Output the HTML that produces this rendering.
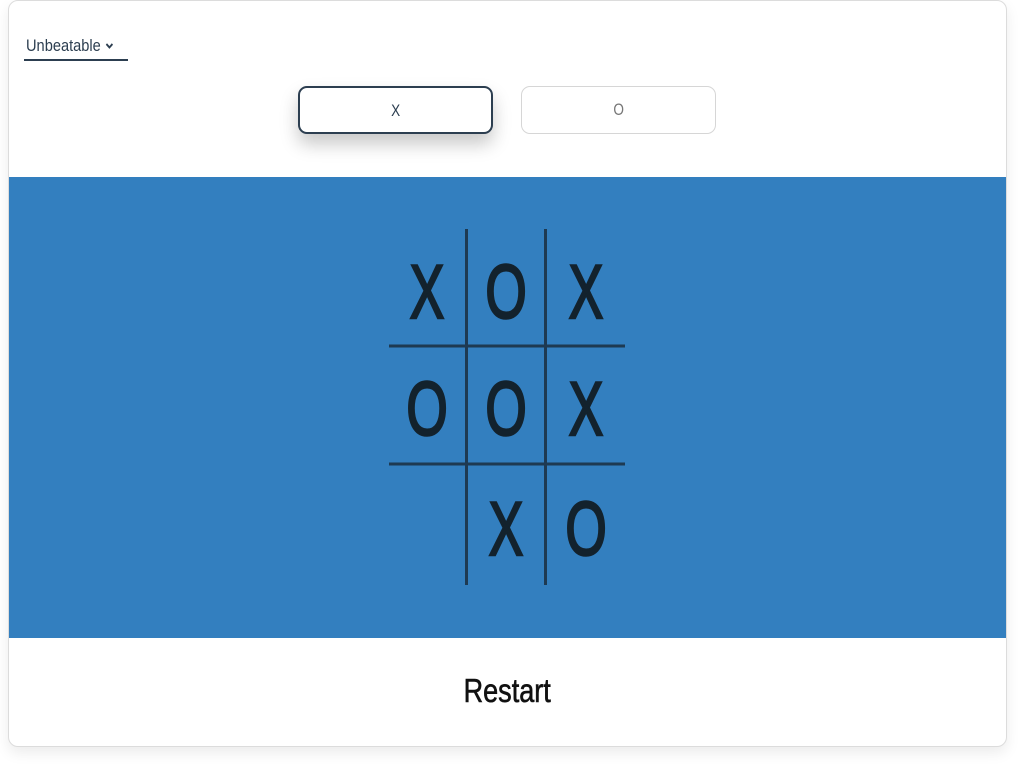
<!DOCTYPE html>
<html><head><meta charset="utf-8"><style>
html,body{margin:0;padding:0;background:#fff;width:1024px;height:768px;overflow:hidden;font-family:"Liberation Sans",sans-serif}
.card{position:absolute;left:8px;top:0;width:997px;height:745px;border:1px solid #dcdcdc;border-radius:10px;box-shadow:0 6px 14px rgba(0,0,0,0.08);overflow:hidden;background:#fff}
.sel{position:absolute;left:24px;top:36px;width:104px;height:23px;border-bottom:2px solid #2c3e50;color:#2c3e50;font-size:17px}
.sel span{display:inline-block;transform:scaleX(0.86);transform-origin:left;position:absolute;left:2px;top:0px;white-space:nowrap}
.btn{position:absolute;top:86px;width:195px;height:48px;box-sizing:border-box;border-radius:9px;background:#fff;text-align:center;line-height:46px;font-size:17px}
.btn span{display:inline-block;transform:scaleX(0.8)}
.bx{left:298px;border:2px solid #2c3e50;color:#2c3e50;box-shadow:0 10px 18px rgba(0,0,0,0.22)}
.bo{left:521px;border:1px solid #d6d6d6;color:#777}
.band{position:absolute;left:9px;top:177px;width:997px;height:461px;background:#337fbf}
.restart{position:absolute;left:0;width:1014px;top:672px;text-align:center;font-size:33px;color:#111;-webkit-text-stroke:0.6px #111}
.restart span{display:inline-block;transform:scaleX(0.82)}
</style></head><body>
<div class="card"></div>
<div class="sel"><span>Unbeatable <svg width="10" height="8" viewBox="0 0 10 8" style="vertical-align:1px"><path d="M1.5 2 L5 5.5 L8.5 2" stroke="#2c3e50" stroke-width="2" fill="none"/></svg></span></div>
<div class="btn bx"><span>X</span></div>
<div class="btn bo"><span>O</span></div>
<div class="band"></div>
<svg style="position:absolute;left:0;top:0" width="1024" height="768">
<g stroke="#1e3a52" stroke-width="3">
<line x1="466.5" y1="229" x2="466.5" y2="585"/>
<line x1="545.5" y1="229" x2="545.5" y2="585"/>
<line x1="389" y1="346" x2="625" y2="346"/>
<line x1="389" y1="464" x2="625" y2="464"/>
</g>
<g fill="#13222d" stroke="#13222d" stroke-width="2.5" font-family="Liberation Sans, sans-serif" font-size="76" text-anchor="middle">
<text transform="translate(427,318) scale(0.68,1)">X</text>
<text transform="translate(506,318) scale(0.7,1)">O</text>
<text transform="translate(586,318) scale(0.68,1)">X</text>
<text transform="translate(427,435) scale(0.7,1)">O</text>
<text transform="translate(506,435) scale(0.7,1)">O</text>
<text transform="translate(586,435) scale(0.68,1)">X</text>
<text transform="translate(506,555) scale(0.68,1)">X</text>
<text transform="translate(586,555) scale(0.7,1)">O</text>
</g>
</svg>
<div class="restart"><span>Restart</span></div>
</body></html>
